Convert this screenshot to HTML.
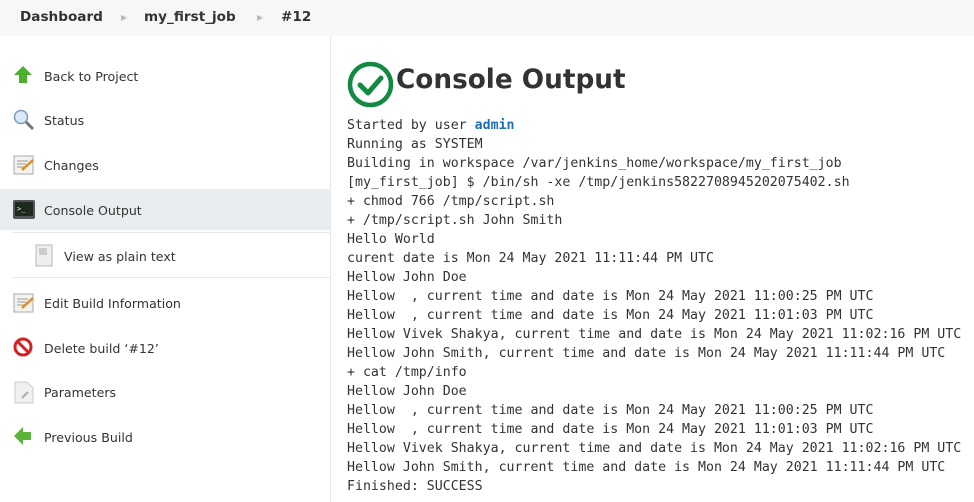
<!DOCTYPE html>
<html><head><meta charset="utf-8"><style>
*{margin:0;padding:0;box-sizing:border-box}
body{width:974px;height:502px;overflow:hidden;background:#fff;font-family:"DejaVu Sans","Liberation Sans",sans-serif;color:#333;position:relative}
.bc{position:absolute;left:0;top:0;width:974px;height:36px;background:#f6f7f8;font-weight:bold;font-size:13.6px;color:#333}
.bc span{position:absolute;top:9px}
.bc .ar{color:#bbb;font-size:8px;top:13px}
.side{position:absolute;left:0;top:36px;width:331px;height:466px;border-right:1px solid #e6e6e6}
.it{position:absolute;left:0;width:331px;height:42px;font-size:12.6px;color:#333}
.it .t{position:absolute;left:44px;top:14px}
.it svg{position:absolute;left:13px;top:10px}
h1{position:absolute;left:396px;top:65px;font-size:26.3px;font-weight:bold;color:#333;white-space:nowrap}
pre{position:absolute;left:347px;top:116px;font-family:"DejaVu Sans Mono",monospace;font-size:13.25px;line-height:19px;color:#333}
pre b{color:#1f6fb0}
</style></head><body>
<div class="bc"><span style="left:20px">Dashboard</span><span class="ar" style="left:121px">▶</span><span style="left:144px">my_first_job</span><span class="ar" style="left:257px">▶</span><span style="left:281px">#12</span></div>
<div class="side">
<div class="it" style="top:19px"><svg width="20" height="20"><path d="M10 1 L19 10 H14 V18 H6 V10 H1 Z" fill="#4caf2e"/></svg><span class="t">Back to Project</span></div>
<div class="it" style="top:63px"><svg width="22" height="22"><circle cx="8" cy="8" r="6.5" fill="#dbe9f7" stroke="#7a9bbf" stroke-width="1.5"/><path d="M13 13 L20 20" stroke="#777" stroke-width="3"/></svg><span class="t">Status</span></div>
<div class="it" style="top:108px"><svg width="22" height="22"><rect x="1" y="2" width="19" height="18" fill="#f3f3ef" stroke="#aaa"/><path d="M4 7h11M4 10h9M4 13h7" stroke="#999"/><path d="M9 16 L20 6" stroke="#e08a1e" stroke-width="2.5"/></svg><span class="t">Changes</span></div>
<div class="it" style="top:153px;background:#e9edf0;height:41px"><svg width="22" height="22"><rect x="0" y="1" width="22" height="19" rx="2" fill="#555"/><rect x="2" y="3" width="18" height="14" fill="#1e2a1e"/><text x="4" y="12" font-size="7" fill="#fff" font-family="DejaVu Sans Mono">&gt;_</text></svg><span class="t">Console Output</span></div>
<div style="position:absolute;left:12px;top:196px;width:319px;height:46px;border-top:1px solid #e6e9ec;border-bottom:1px solid #e6e9ec"></div>
<div class="it" style="top:199px"><svg width="20" height="24" style="left:35px;top:9px"><rect x="1" y="1" width="16" height="21" fill="#eee" stroke="#bbb"/><rect x="4" y="4" width="8" height="7" fill="#ccc"/></svg><span class="t" style="left:64px">View as plain text</span></div>
<div class="it" style="top:246px"><svg width="22" height="22"><rect x="1" y="2" width="19" height="18" fill="#f3f3ef" stroke="#aaa"/><path d="M4 7h11M4 10h9M4 13h7" stroke="#999"/><path d="M9 16 L20 6" stroke="#e08a1e" stroke-width="2.5"/></svg><span class="t">Edit Build Information</span></div>
<div class="it" style="top:291px"><svg width="22" height="22"><circle cx="10" cy="10" r="8" fill="#fff" stroke="#d42020" stroke-width="3"/><path d="M4.5 4.5 L15.5 15.5" stroke="#d42020" stroke-width="3"/></svg><span class="t">Delete build ‘#12’</span></div>
<div class="it" style="top:335px"><svg width="22" height="24"><path d="M2 1 H14 L20 7 V22 H2 Z" fill="#f0f0f0" stroke="#ccc"/><path d="M9 17 L15 11" stroke="#aaa" stroke-width="2"/></svg><span class="t">Parameters</span></div>
<div class="it" style="top:380px"><svg width="20" height="20"><path d="M1 10 L10 1 V6 H18 V14 H10 V19 Z" fill="#5bb33a"/></svg><span class="t">Previous Build</span></div>
</div>
<svg style="position:absolute;left:347px;top:61px" width="48" height="48"><circle cx="23.5" cy="23.5" r="20.5" fill="none" stroke="#138a42" stroke-width="4.5"/><path d="M13 24 L21 32 L34 17" fill="none" stroke="#138a42" stroke-width="5" stroke-linecap="round" stroke-linejoin="round"/></svg>
<h1>Console Output</h1>
<pre>Started by user <b>admin</b>
Running as SYSTEM
Building in workspace /var/jenkins_home/workspace/my_first_job
[my_first_job] $ /bin/sh -xe /tmp/jenkins5822708945202075402.sh
+ chmod 766 /tmp/script.sh
+ /tmp/script.sh John Smith
Hello World
curent date is Mon 24 May 2021 11:11:44 PM UTC
Hellow John Doe
Hellow  , current time and date is Mon 24 May 2021 11:00:25 PM UTC
Hellow  , current time and date is Mon 24 May 2021 11:01:03 PM UTC
Hellow Vivek Shakya, current time and date is Mon 24 May 2021 11:02:16 PM UTC
Hellow John Smith, current time and date is Mon 24 May 2021 11:11:44 PM UTC
+ cat /tmp/info
Hellow John Doe
Hellow  , current time and date is Mon 24 May 2021 11:00:25 PM UTC
Hellow  , current time and date is Mon 24 May 2021 11:01:03 PM UTC
Hellow Vivek Shakya, current time and date is Mon 24 May 2021 11:02:16 PM UTC
Hellow John Smith, current time and date is Mon 24 May 2021 11:11:44 PM UTC
Finished: SUCCESS</pre>
</body></html>
